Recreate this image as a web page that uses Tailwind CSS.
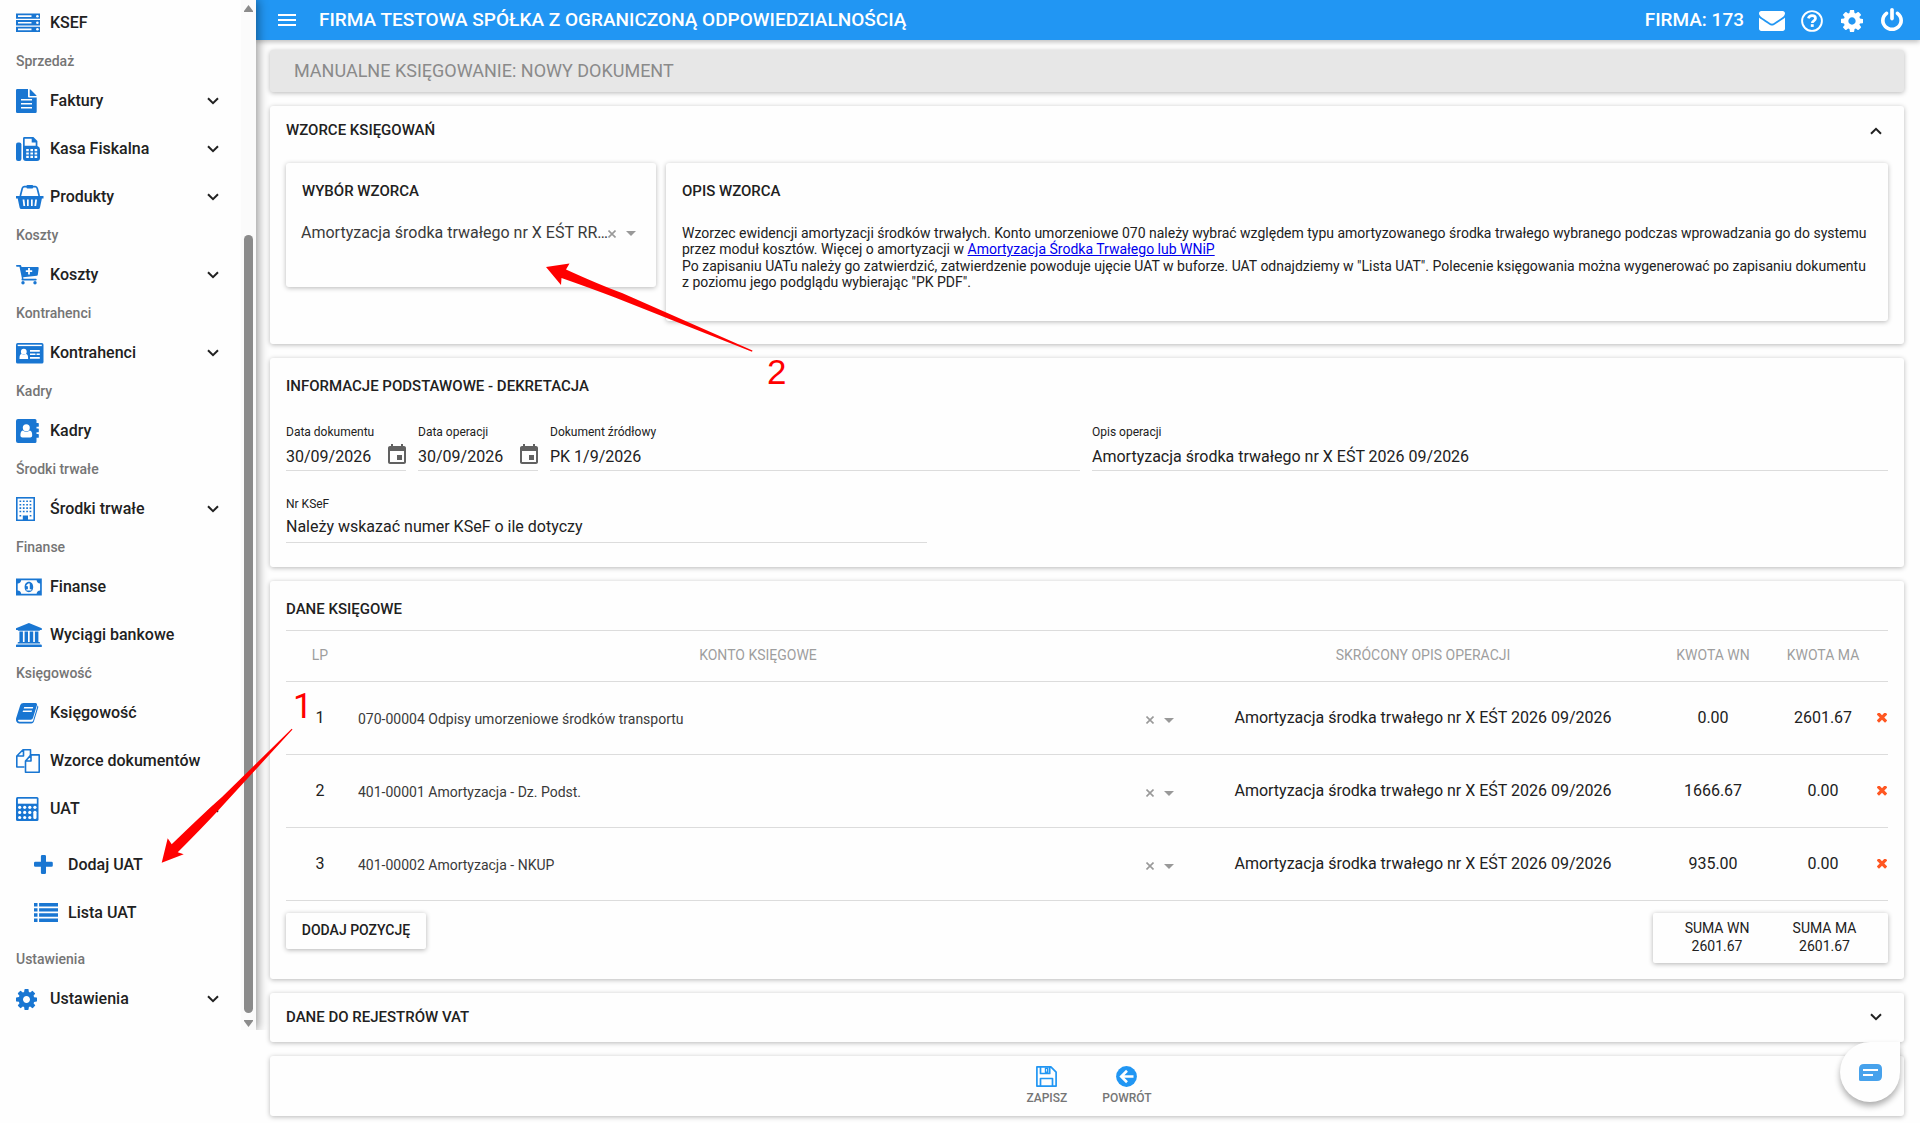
<!DOCTYPE html>
<html lang="pl">
<head>
<meta charset="utf-8">
<title>Manualne księgowanie</title>
<script src="https://cdn.jsdelivr.net/npm/@tailwindcss/browser@4"></script>
</head>
<body class="relative w-[1920px] h-[1123px] overflow-hidden bg-[#fefefe] font-['Roboto',sans-serif] text-[#212121]">
<svg class="hidden">
  <symbol id="down" viewBox="0 0 12 8"><path d="M1 1.3 6 6.2 11 1.3" fill="none" stroke="currentColor" stroke-width="2"/></symbol>
  <symbol id="cog" viewBox="128 128 1536 1536"><path fill="currentColor" d="M1152 896q0-106-75-181t-181-75-181 75-75 181 75 181 181 75 181-75 75-181zm512-109v222q0 12-8 23t-20 13l-185 28q-19 54-39 91 35 50 107 138 10 12 10 25t-9 23q-27 37-99 108t-94 71q-12 0-26-9l-138-108q-44 23-91 38-16 136-29 186-7 28-36 28h-222q-14 0-24.500-8.500t-11.500-21.500l-28-184q-49-16-90-37l-141 107q-10 9-25 9-14 0-25-11-126-114-165-168-7-10-7-23 0-12 8-23 15-21 51-66.500t54-70.500q-27-50-41-99l-183-27q-13-2-21-12.500t-8-23.500v-222q0-12 8-23t19-13l186-28q14-46 39-92-40-57-107-138-10-12-10-24 0-10 9-23 26-36 98.500-107.500t94.500-71.500q13 0 26 10l138 107q44-23 91-38 16-136 29-186 7-28 36-28h222q14 0 24.500 8.500t11.500 21.500l28 184q49 16 90 37l142-107q9-9 24-9 13 0 25 10 129 119 165 170 7 8 7 22 0 12-8 23-15 21-51 66.500t-54 70.500q26 50 41 98l183 28q13 2 21 12.500t8 23.500z"/></symbol>
  <symbol id="times" viewBox="302 334 1188 1188"><path fill="currentColor" d="M1490 1222q0 40-28 68l-136 136q-28 28-68 28t-68-28l-294-294-294 294q-28 28-68 28t-68-28l-136-136q-28-28-28-68t28-68l294-294-294-294q-28-28-28-68t28-68l136-136q28-28 68-28t68 28l294 294 294-294q28-28 68-28t68 28l136 136q28 28 28 68t-28 68l-294 294 294 294q28 28 28 68z"/></symbol>
  <symbol id="clear" viewBox="0 0 8 8"><path d="M.5.500 7.500 7.500M7.500.500.5 7.500" stroke="#999" stroke-width="1.600"/></symbol>
  <symbol id="caret" viewBox="0 0 10 5"><path d="M0 0h10L5 5z" fill="#999"/></symbol>
  <symbol id="cal" viewBox="3 1 18 20"><path fill="#616161" d="M17 12h-5v5h5v-5zM16 1v2H8V1H6v2H5c-1.110 0-1.990.9-1.990 2L3 19c0 1.100.89 2 2 2h14c1.100 0 2-.9 2-2V5c0-1.100-.9-2-2-2h-1V1h-2zm3 18H5V8h14v11z"/></symbol>
</svg>

<!-- top bar -->
<header class="relative ml-[256px] h-10 flex items-center bg-[#2196f3] text-white pl-[22px] pr-[17px] shadow-[0_2px_5px_rgba(0,0,0,0.26)]">
  <svg class="w-[18px] h-3" viewBox="0 0 18 12"><path d="M0 1h18M0 6h18M0 11h18" stroke="#fff" stroke-width="2"/></svg>
  <h1 class="ml-[23px] text-[19px] leading-[22px] font-medium whitespace-nowrap">FIRMA TESTOWA SPÓŁKA Z OGRANICZONĄ ODPOWIEDZIALNOŚCIĄ</h1>
  <span class="ml-auto text-[19px] leading-[22px] font-medium">FIRMA: 173</span>
  <svg class="ml-[15px] mt-[2px] w-[26px] h-5" viewBox="0 256 1792 1408" preserveAspectRatio="none"><path fill="#fff" d="M1792 710v794q0 66-47 113t-113 47h-1472q-66 0-113-47t-47-113v-794q44 49 101 87 362 246 497 345 57 42 92.500 65.500t94.500 48 110 24.500h2q51 0 110-24.500t94.500-48 92.500-65.500q170-123 498-345 57-39 100-87zm0-294q0 79-49 151t-122 123q-376 261-468 325-10 7-42.500 31t-54 38.500-52 32.500-57.500 27-50 9h-2q-23 0-50-9t-57.500-27-52-32.500-54-38.500-42.500-31q-91-64-262-182.500t-205-142.500q-62-42-117-115.500t-55-136.500q0-78 41.500-130t118.500-52h1472q65 0 112.500 47t47.500 113z"/></svg>
  <svg class="ml-4 mt-px w-[22px] h-[22px]" viewBox="0 0 22 22"><circle cx="11" cy="11" r="9.900" fill="none" stroke="#fff" stroke-width="1.900"/><path d="M7.300 8.400C8 6.500 9.300 5.700 11 5.700c2 0 3.500 1.200 3.500 2.800 0 2.400-3.200 2.400-3.200 4.500" fill="none" stroke="#fff" stroke-width="2.700"/><path d="M9.800 14.200h2.900v2.700H9.800z" fill="#fff"/></svg>
  <svg class="ml-[18px] mt-px w-[22px] h-[22px]"><use href="#cog"/></svg>
  <svg class="ml-[18px] -mt-px w-[22px] h-[23px]" viewBox="128 0 1536 1664" preserveAspectRatio="none"><path fill="#fff" d="M1664 896q0 156-61 298t-164 245-245 164-298 61-298-61-245-164-164-245-61-298q0-182 80.500-343t226.500-270q43-32 95.500-25t83.500 50q32 42 24.500 94.500t-49.500 84.500q-98 74-151.500 181t-53.500 228q0 104 40.500 198.500t109.500 163.500 163.500 109.500 198.500 40.500 198.500-40.500 163.500-109.500 109.500-163.500 40.500-198.500q0-121-53.500-228t-151.500-181q-42-32-49.500-84.500t24.500-94.500q31-43 84-50t95 25q146 109 226.500 270t80.500 343zm-640-768v640q0 52-38 90t-90 38-90-38-38-90v-640q0-52 38-90t90-38 90 38 38 90z"/></svg>
</header>

<!-- side menu -->
<div class="absolute left-0 top-0 w-[276px] h-[1030px] overflow-hidden">
 <div class="flex w-64 h-[1030px] bg-[#fefefe] shadow-[2px_0_10px_rgba(0,0,0,0.42)]">
  <nav class="flex-1 -mt-[2px] text-[16px] font-medium">
    <div class="h-12 flex items-center pt-[2px] pl-4"><svg class="w-[34px] h-6 shrink-0 text-[#1976d2]" viewBox="0 0 34 24"><path fill="currentColor" fill-rule="evenodd" d="M0 2.500h24v5.300H0zM0 9h24v5.400H0zM0 15.700h24V21H0zM2 4.300v1.700h13.500V4.300zM2 10.900v1.700h13.500v-1.700zM2 17.500v1.700h13.500v-1.700z"/><g fill="#fff"><circle cx="21.400" cy="5.200" r="1.300"/><circle cx="21.400" cy="11.700" r="1.300"/><circle cx="21.400" cy="18.300" r="1.300"/></g></svg>KSEF</div>
    <div class="h-[30px] flex items-center pl-4 text-sm text-[#757575]">Sprzedaż</div>
    <div class="h-12 flex items-center pt-[2px] pl-4 pr-[22px]"><svg class="w-[34px] h-6 shrink-0" viewBox="0 0 34 24"><path fill="#1976d2" d="M1.200 0H12v7.500q0 1 1 1h7.700v14.200q0 1.300-1.300 1.300H1.200Q0 24 0 22.700V1.200Q0 0 1.200 0zM13.700.2q.8.200 1.300.8l5 5q.5.500.6 1.100h-6.900z"/><path d="M5 10.800h11M5 14.800h11M5 18.800h11" stroke="#fff" stroke-width="1.600"/></svg>Faktury<svg class="ml-auto w-3 h-2"><use href="#down"/></svg></div>
    <div class="h-12 flex items-center pt-[2px] pl-4 pr-[22px]"><svg class="w-[34px] h-6 shrink-0" viewBox="0 0 34 24"><rect x="0" y="5.500" width="5.400" height="18.500" rx="2" fill="#1976d2"/><path fill="#1976d2" fill-rule="evenodd" d="M8.400 0h9l4 4v5q2.600.8 2.600 3.500V21q0 3-3 3H10q-3 0-3-3V1.400Q7 0 8.400 0zm.3 1.700v7.100h11V5.500h-4V1.700z"/><path d="M11.500 12v9M15.700 12v9M19.900 12v9" stroke="#fff" stroke-width="2.600" stroke-dasharray="2.200 1.200"/></svg>Kasa Fiskalna<svg class="ml-auto w-3 h-2"><use href="#down"/></svg></div>
    <div class="h-12 flex items-center pt-[2px] pl-4 pr-[22px]"><svg class="w-[34px] h-6 shrink-0" viewBox="0 0 34 24"><path fill="#1976d2" fill-rule="evenodd" d="M0 11h27.500v2.400h-1.600L24 22.500q-.3 1.500-1.700 1.500H5.300q-1.400 0-1.700-1.500L1.700 13.400H0zM6.600 14.500l.8 6.500h1.800l-.8-6.500zM11 14.500v6.500h1.700v-6.500zM15 14.500v6.500h1.700v-6.500zM19.200 14.500l-.8 6.500h1.800l.8-6.500z"/><path d="M4.300 11 6.300 3.300Q6.800 1.800 8.200 1.600H19.300q1.400.2 1.900 1.700L23.200 11" fill="none" stroke="#1976d2" stroke-width="1.700"/><rect x="10.500" y="0" width="6.600" height="3.600" rx="1" fill="#1976d2"/></svg>Produkty<svg class="ml-auto w-3 h-2"><use href="#down"/></svg></div>
    <div class="h-[30px] flex items-center pl-4 text-sm text-[#757575]">Koszty</div>
    <div class="h-12 flex items-center pt-[2px] pl-4 pr-[22px]"><svg class="w-[34px] h-6 shrink-0" viewBox="0 0 34 24"><path fill="#1976d2" d="M1 2h3.300q.8 0 1 1l.2 1.100h16.300q1 0 .9 1.200l-.9 6.500q-.1.900-1 1L7.200 14.200l.2 1.500h12.400q.9 0 .9 1 0 .8-.9.800H6.400q-.9 0-.9-.9l.4-1.300L3.500 3.700H1Q0 3.700 0 2.800T1 2z"/><circle cx="7" cy="19.800" r="1.700" fill="#1976d2"/><circle cx="19" cy="19.800" r="1.700" fill="#1976d2"/><path d="M13 5v6.400M9.800 8.200h6.400" stroke="#fff" stroke-width="1.800"/></svg>Koszty<svg class="ml-auto w-3 h-2"><use href="#down"/></svg></div>
    <div class="h-[30px] flex items-center pl-4 text-sm text-[#757575]">Kontrahenci</div>
    <div class="h-12 flex items-center pt-[2px] pl-4 pr-[22px]"><svg class="w-[34px] h-6 shrink-0" viewBox="0 0 34 24"><rect x="0" y="2" width="27.500" height="20.600" rx="1.700" fill="#1976d2"/><g fill="#fff"><path d="M1.700 3.700h24.100v1.400H1.700z"/><circle cx="7.800" cy="10.700" r="2.900"/><path d="M3.500 18q-.2-5 2.300-5 2 1.300 4 0 2.500 0 2.300 5z"/><path d="M14 9h9.800v1.700H14zM14 12.500h5.500v1.600H14zM20.500 12.500h3.300v1.600h-3.300zM14 16h9.800v1.700H14z"/></g></svg>Kontrahenci<svg class="ml-auto w-3 h-2"><use href="#down"/></svg></div>
    <div class="h-[30px] flex items-center pl-4 text-sm text-[#757575]">Kadry</div>
    <div class="h-12 flex items-center pt-[2px] pl-4"><svg class="w-[34px] h-6 shrink-0" viewBox="0 0 34 24"><path fill="#1976d2" d="M2 0h17q1.500 0 1.500 1.500V4h1.700q.6 0 .6.700v2.500q0 .6-.6.600h-1.700v1.700h1.700q.6 0 .6.600v2.600q0 .6-.6.600h-1.700V15h1.700q.6 0 .6.700v2.500q0 .6-.6.600h-1.700v3.700q0 1.500-1.500 1.500H2q-2 0-2-2V2Q0 0 2 0z"/><circle cx="10.300" cy="8.700" r="3.500" fill="#fff"/><path fill="#fff" d="M6.800 11.500q3.500 2.600 7 0 2.500.3 2.400 5 0 2-2 2H6.400q-2 0-2-2 0-4.700 2.400-5z"/></svg>Kadry</div>
    <div class="h-[30px] flex items-center pl-4 text-sm text-[#757575]">Środki trwałe</div>
    <div class="h-12 flex items-center pt-[2px] pl-4 pr-[22px]"><svg class="w-[34px] h-6 shrink-0" viewBox="0 0 34 24"><rect x=".8" y=".8" width="17.400" height="22.500" fill="none" stroke="#1976d2" stroke-width="1.600"/><path d="M3.500 4.300h12M3.500 7.700h12M3.500 11.100h12M3.500 14.500h12" stroke="#1976d2" stroke-width="1.600" stroke-dasharray="1.700 1.670"/><path d="M3.500 18h1.700v1.600H3.500zM13.700 18h1.700v1.600h-1.700zM6.800 18.500h5.200V24H6.800z" fill="#1976d2"/></svg>Środki trwałe<svg class="ml-auto w-3 h-2"><use href="#down"/></svg></div>
    <div class="h-[30px] flex items-center pl-4 text-sm text-[#757575]">Finanse</div>
    <div class="h-12 flex items-center pt-[2px] pl-4"><svg class="w-[34px] h-6 shrink-0" viewBox="0 0 34 24"><path fill="#1976d2" fill-rule="evenodd" d="M0 3.400h25.800v17.200H0zM5.200 5.200q-.3 3-3.500 3.400v6.800q3.200.4 3.500 3.400h15.400q.3-3 3.500-3.400V8.600q-3.200-.4-3.500-3.400zM12.900 6.800c2.600 0 4.300 2.300 4.300 5.200s-1.700 5.200-4.300 5.200-4.300-2.300-4.300-5.200 1.700-5.200 4.300-5.200zM12.200 8.500l-2.100 1.900 1 1.100.8-.6v3.300h-1.500v1.300h5v-1.300h-1.600V8.500z"/></svg>Finanse</div>
    <div class="h-12 flex items-center pt-[2px] pl-4"><svg class="w-[34px] h-6 shrink-0" viewBox="0 0 34 24"><path fill="#1976d2" d="M12.900 0 25.800 5.200v1.700h-1.700q0 .8-1 .8H2.700q-1 0-1-.8H0V5.200zM3.400 8.600h3.500v10.300h1.700V8.600H12v10.300h1.700V8.600h3.500v10.300h1.700V8.600h3.500v10.300h.7q1 0 1 .9v.8H1.700v-.8q0-.9 1-.9h.7zM.9 21.400h24q.9 0 .9.900V24H0v-1.700q0-.9.900-.9z"/></svg>Wyciągi bankowe</div>
    <div class="h-[30px] flex items-center pl-4 text-sm text-[#757575]">Księgowość</div>
    <div class="h-12 flex items-center pt-[2px] pl-4"><svg class="w-[34px] h-6 shrink-0" viewBox="0 0 34 24"><path fill="#1976d2" fill-rule="evenodd" d="M7.500 2h12.200q1.600.2 1.300 2l-4 13q-.5 1.800-2.300 1.800H2.800q-1 0-.7 1t1.700 1h12q1 0 1.300-1L21.200 6q.2-.7.100-1.400 1.300.5.900 2l-4.300 14Q17.200 22.600 15.300 22.600H3.500Q1.300 22.600.4 20.600T.5 16L4.300 4Q5 2 7.500 2zM8.200 6l-.5 1.500h9l.5-1.500zM7.100 9.400l-.5 1.500h9l.5-1.500z"/></svg>Księgowość</div>
    <div class="h-12 flex items-center pt-[2px] pl-4"><svg class="w-[34px] h-6 shrink-0" viewBox="0 0 34 24"><g fill="none" stroke="#1976d2" stroke-width="1.600" stroke-linejoin="round"><path d="M8.500 18H.8V7L7 .8h7.500v6M.8 7h6.700V.8"/><path d="M15 5.900h8.200v17.300H9.500V12zM15 5.900V12H9.500"/></g></svg>Wzorce dokumentów</div>
    <div class="h-12 flex items-center pt-[2px] pl-4 pr-[22px]"><svg class="w-[34px] h-6 shrink-0" viewBox="0 0 34 24"><rect width="22.500" height="24" rx="1.500" fill="#1976d2"/><path fill="#fff" d="M1.900 1.700h18.900v5H1.900z"/><g fill="#fff"><circle cx="3.700" cy="10.300" r="1.600"/><circle cx="8.700" cy="10.300" r="1.600"/><circle cx="13.800" cy="10.300" r="1.600"/><circle cx="18.900" cy="10.300" r="1.600"/><circle cx="3.700" cy="15.400" r="1.600"/><circle cx="8.700" cy="15.400" r="1.600"/><circle cx="13.800" cy="15.400" r="1.600"/><rect x="17.300" y="13.800" width="3.200" height="8.300" rx="1.500"/><circle cx="3.700" cy="20.500" r="1.600"/><circle cx="8.700" cy="20.500" r="1.600"/><circle cx="13.800" cy="20.500" r="1.600"/></g></svg>UAT<svg class="ml-auto w-3 h-2 rotate-180"><use href="#down"/></svg></div>
    <div class="mt-2 h-12 flex items-center pt-[2px] pl-[34px]"><svg class="w-[34px] h-6 shrink-0" viewBox="0 0 34 24"><path fill="#1976d2" d="M8.200 2h2.500q1.300 0 1.300 1.300v5.400h5.500q1.300 0 1.300 1.300v2.600q0 1.200-1.300 1.200H12v6q0 1.300-1.300 1.300H8.200q-1.300 0-1.300-1.300v-6H1.300Q0 13.800 0 12.600V10q0-1.300 1.300-1.300h5.600V3.300Q6.900 2 8.200 2z"/></svg>Dodaj UAT</div>
    <div class="h-12 flex items-center pt-[2px] pl-[34px]"><svg class="w-[34px] h-6 shrink-0" viewBox="0 0 34 24"><path d="M0 3.700h3.500M0 8.900h3.500M0 14h3.500M0 19.200h3.500M5.100 3.700H24M5.100 8.900H24M5.100 14H24M5.100 19.200H24" stroke="#1976d2" stroke-width="3.400"/></svg>Lista UAT</div>
    <div class="mt-2 h-[30px] flex items-center pl-4 text-sm text-[#757575]">Ustawienia</div>
    <div class="h-12 flex items-center pt-[2px] pl-4 pr-[22px]"><svg class="w-[21px] h-[21px] mr-[13px] shrink-0 text-[#1976d2]"><use href="#cog"/></svg>Ustawienia<svg class="ml-auto w-3 h-2"><use href="#down"/></svg></div>
  </nav>
  <div class="w-[15px] flex flex-col items-center bg-[#fbfbfb] py-[3px]">
    <svg class="w-[9px] h-[7px] mt-[2px]" viewBox="0 0 9 7"><path d="M4.500 0 9 6v1H0V6z" fill="#8b8b8b"/></svg>
    <div class="mt-[223px] w-[9px] h-[778px] rounded-full bg-[#8b8b8b]"></div>
    <svg class="w-[9px] h-[7px] mt-[7px]" viewBox="0 0 9 7"><path d="M4.500 7 9 1V0H0v1z" fill="#8b8b8b"/></svg>
  </div>
 </div>
</div>

<main class="ml-[270px] mt-[10px] w-[1634px] flex flex-col gap-[14px] text-[15px]">
  <div class="h-[42px] flex items-center pl-6 pb-[2px] rounded-[3px] bg-[#e7e7e7] text-[18px] text-[#8a8a8a] shadow-[0_1px_5px_rgba(0,0,0,0.28)]">MANUALNE KSIĘGOWANIE: NOWY DOKUMENT</div>

  <section class="h-[238px] px-4 rounded-[3px] bg-[#fefefe] shadow-[0_1px_5px_rgba(0,0,0,0.28)]">
    <div class="h-[57px] flex items-center pb-[9px] pr-[6px] font-medium">WZORCE KSIĘGOWAŃ<svg class="ml-auto mt-[2px] w-3 h-2 rotate-180"><use href="#down"/></svg></div>
    <div class="flex items-start gap-[10px]">
      <div class="w-[370px] h-[124px] rounded-[3px] px-4 bg-[#fefefe] shadow-[0_1px_5px_rgba(0,0,0,0.28)]">
        <div class="pt-[19px] leading-[18px] font-medium">WYBÓR WZORCA</div>
        <div class="-ml-px mt-[22px] flex items-center text-[16px] leading-[22px] text-[#3a3a3a] whitespace-nowrap"><span class="w-[307px]">Amortyzacja środka trwałego nr X EŚT RR…</span><svg class="mt-[2px] w-2 h-2 shrink-0"><use href="#clear"/></svg><svg class="ml-[10px] mt-px w-[10px] h-[5px] shrink-0"><use href="#caret"/></svg></div>
      </div>
      <div class="flex-1 h-[158px] rounded-[3px] px-4 bg-[#fefefe] shadow-[0_1px_5px_rgba(0,0,0,0.28)]">
        <div class="pt-[19px] leading-[18px] font-medium">OPIS WZORCA</div>
        <div class="mt-[25px] text-[14px] leading-[16.400px] whitespace-nowrap">Wzorzec ewidencji amortyzacji środków trwałych. Konto umorzeniowe 070 należy wybrać względem typu amortyzowanego środka trwałego wybranego podczas wprowadzania go do systemu<br>przez moduł kosztów. Więcej o amortyzacji w <a class="text-[#0000ee] underline">Amortyzacja Środka Trwałego lub WNiP</a><br>Po zapisaniu UATu należy go zatwierdzić, zatwierdzenie powoduje ujęcie UAT w buforze. UAT odnajdziemy w "Lista UAT". Polecenie księgowania można wygenerować po zapisaniu dokumentu<br>z poziomu jego podglądu wybierając "PK PDF".</div>
      </div>
    </div>
  </section>

  <section class="h-[209px] px-4 rounded-[3px] bg-[#fefefe] shadow-[0_1px_5px_rgba(0,0,0,0.28)]">
    <div class="pt-[19px] leading-[18px] font-medium">INFORMACJE PODSTAWOWE - DEKRETACJA</div>
    <div class="mt-[30px] flex gap-3">
      <div class="w-[120px] border-b border-[#dcdcdc]"><div class="text-[12px] leading-[14px]">Data dokumentu</div><div class="h-[31px] pt-[5px] flex items-center text-[16px]">30/09/2026<svg class="ml-auto -mt-[6px] w-[18px] h-5"><use href="#cal"/></svg></div></div>
      <div class="w-[120px] border-b border-[#dcdcdc]"><div class="text-[12px] leading-[14px]">Data operacji</div><div class="h-[31px] pt-[5px] flex items-center text-[16px]">30/09/2026<svg class="ml-auto -mt-[6px] w-[18px] h-5"><use href="#cal"/></svg></div></div>
      <div class="w-[530px] border-b border-[#dcdcdc]"><div class="text-[12px] leading-[14px]">Dokument źródłowy</div><div class="h-[31px] pt-[5px] flex items-center text-[16px]">PK 1/9/2026</div></div>
      <div class="flex-1 border-b border-[#dcdcdc]"><div class="text-[12px] leading-[14px]">Opis operacji</div><div class="h-[31px] pt-[5px] flex items-center text-[16px]">Amortyzacja środka trwałego nr X EŚT 2026 09/2026</div></div>
    </div>
    <div class="mt-[26px] w-[641px] border-b border-[#dcdcdc]"><div class="text-[12px] leading-[14px]">Nr KSeF</div><div class="h-[31px] pt-px flex items-center text-[16px]">Należy wskazać numer KSeF o ile dotyczy</div></div>
  </section>

  <section class="h-[398px] px-4 rounded-[3px] bg-[#fefefe] shadow-[0_1px_5px_rgba(0,0,0,0.28)]">
    <div class="pt-[19px] pb-[12px] leading-[18px] font-medium">DANE KSIĘGOWE</div>
    <div class="grid grid-cols-[68px_824px_490px_90px_112px_18px] h-[51px] pb-px items-center border-t border-[#dcdcdc] text-center text-[14px] text-[#9e9e9e]">
      <span>LP</span><span class="pr-4">KONTO KSIĘGOWE</span><span>SKRÓCONY OPIS OPERACJI</span><span class="whitespace-nowrap">KWOTA WN</span><span class="pl-[18px]">KWOTA MA</span>
    </div>
    <div class="grid grid-cols-[68px_824px_490px_90px_112px_18px] h-[73px] items-center border-t border-[#dcdcdc] text-center text-[16px]">
      <span>1</span><div class="flex items-center pl-1 pt-[3px] text-[14px] text-[#3a3a3a]">070-00004 Odpisy umorzeniowe środków transportu<svg class="ml-auto w-2 h-2"><use href="#clear"/></svg><svg class="ml-[10px] mr-1 mt-px w-[10px] h-[5px]"><use href="#caret"/></svg></div><span>Amortyzacja środka trwałego nr X EŚT 2026 09/2026</span><span>0.00</span><span class="pl-[18px]">2601.67</span><svg class="w-[10px] h-[10px] ml-[7px] mb-px text-[#ff5722]"><use href="#times"/></svg>
    </div>
    <div class="grid grid-cols-[68px_824px_490px_90px_112px_18px] h-[73px] items-center border-t border-[#dcdcdc] text-center text-[16px]">
      <span>2</span><div class="flex items-center pl-1 pt-[3px] text-[14px] text-[#3a3a3a]">401-00001 Amortyzacja - Dz. Podst.<svg class="ml-auto w-2 h-2"><use href="#clear"/></svg><svg class="ml-[10px] mr-1 mt-px w-[10px] h-[5px]"><use href="#caret"/></svg></div><span>Amortyzacja środka trwałego nr X EŚT 2026 09/2026</span><span>1666.67</span><span class="pl-[18px]">0.00</span><svg class="w-[10px] h-[10px] ml-[7px] mb-px text-[#ff5722]"><use href="#times"/></svg>
    </div>
    <div class="grid grid-cols-[68px_824px_490px_90px_112px_18px] h-[74px] items-center border-y border-[#dcdcdc] text-center text-[16px]">
      <span>3</span><div class="flex items-center pl-1 pt-[3px] text-[14px] text-[#3a3a3a]">401-00002 Amortyzacja - NKUP<svg class="ml-auto w-2 h-2"><use href="#clear"/></svg><svg class="ml-[10px] mr-1 mt-px w-[10px] h-[5px]"><use href="#caret"/></svg></div><span>Amortyzacja środka trwałego nr X EŚT 2026 09/2026</span><span>935.00</span><span class="pl-[18px]">0.00</span><svg class="w-[10px] h-[10px] ml-[7px] mb-px text-[#ff5722]"><use href="#times"/></svg>
    </div>
    <div class="mt-3 flex items-start justify-between">
      <button class="w-[140px] h-9 pb-[2px] rounded-[2px] text-[14px] font-medium bg-[#fefefe] shadow-[0_1px_5px_rgba(0,0,0,0.3)]">DODAJ POZYCJĘ</button>
      <div class="w-[235px] h-[50px] pt-[6px] pl-[10px] pr-[10px] flex text-center text-[14px] leading-[18px] rounded-[2px] bg-[#fefefe] shadow-[0_1px_5px_rgba(0,0,0,0.3)]"><div class="w-[108px]">SUMA WN<br>2601.67</div><div class="w-[107px]">SUMA MA<br>2601.67</div></div>
    </div>
  </section>

  <section class="h-[49px] pl-4 pr-[22px] flex items-center font-medium rounded-[3px] bg-[#fefefe] shadow-[0_1px_5px_rgba(0,0,0,0.28)]">DANE DO REJESTRÓW VAT<svg class="ml-auto -mt-px w-3 h-2"><use href="#down"/></svg></section>

  <section class="h-[60px] flex justify-center gap-[35px] pt-[10px] pl-1 rounded-[3px] bg-[#fefefe] text-[12px] leading-[14px] font-medium text-[#757575] shadow-[0_1px_5px_rgba(0,0,0,0.28)]">
    <div class="flex flex-col items-center gap-1"><svg class="w-[21px] h-[21px]" viewBox="0 0 21 21"><path fill="none" stroke="#2196f3" stroke-width="1.700" stroke-linejoin="round" d="M.9.900h14l5.200 5.200v14H.9zM4.500 1v6.500h9.200V1M4.500 20v-7.500h12V20"/><path d="M9.500 2.300h2.200v3.900H9.500z" fill="none" stroke="#2196f3" stroke-width="1.400"/></svg>ZAPISZ</div>
    <div class="flex flex-col items-center gap-1"><svg class="w-[21px] h-[21px]" viewBox="0 0 21 21"><circle cx="10.500" cy="10.500" r="10.400" fill="#2196f3"/><path d="M17.500 10.500H6.500M11 4.800 5.200 10.500 11 16.200" fill="none" stroke="#fefefe" stroke-width="2.600"/></svg>POWRÓT</div>
  </section>
</main>

<!-- chat bubble -->
<div class="absolute left-[1840px] top-[1042px] w-[60px] h-[60px] flex items-center justify-center rounded-full rounded-tr-[8px] bg-[#fefefe] shadow-[0_4px_6px_rgba(0,0,0,0.32)]">
  <svg class="w-[23px] h-[17px] mt-px" viewBox="0 0 23 17"><path fill="#47a2ec" d="M5 0h13q5 0 5 5v7q0 5-5 5H1.500Q0 17 0 15.500V5Q0 0 5 0z"/><path d="M4 6h15M4 11h10" stroke="#fff" stroke-width="1.900"/></svg>
</div>

<!-- annotations -->
<svg class="absolute left-0 top-0 w-[1920px] h-[1123px] pointer-events-none" viewBox="0 0 1920 1123">
  <path fill="#f00" d="M161.700 862.700 167.700 838.300 171.700 844.300Q205 812 222 797L291.700 728.700 292.500 729.500 225 803Q208 822 177.700 852.300L183.700 854.300z"/>
  <path fill="#f00" d="M546 267 569.500 263.500 566 269.500Q600 285 622 293L752.500 350.500 752 351.800 615 297.500Q590 288 561.500 278L561 285z"/>
  <g fill="#f00"><text x="293" y="718" font-family="Roboto, sans-serif" font-size="34.500">1</text><text x="767" y="384" font-family="Liberation Sans, Arial, sans-serif" font-size="35">2</text></g>
</svg>
</body>
</html>
